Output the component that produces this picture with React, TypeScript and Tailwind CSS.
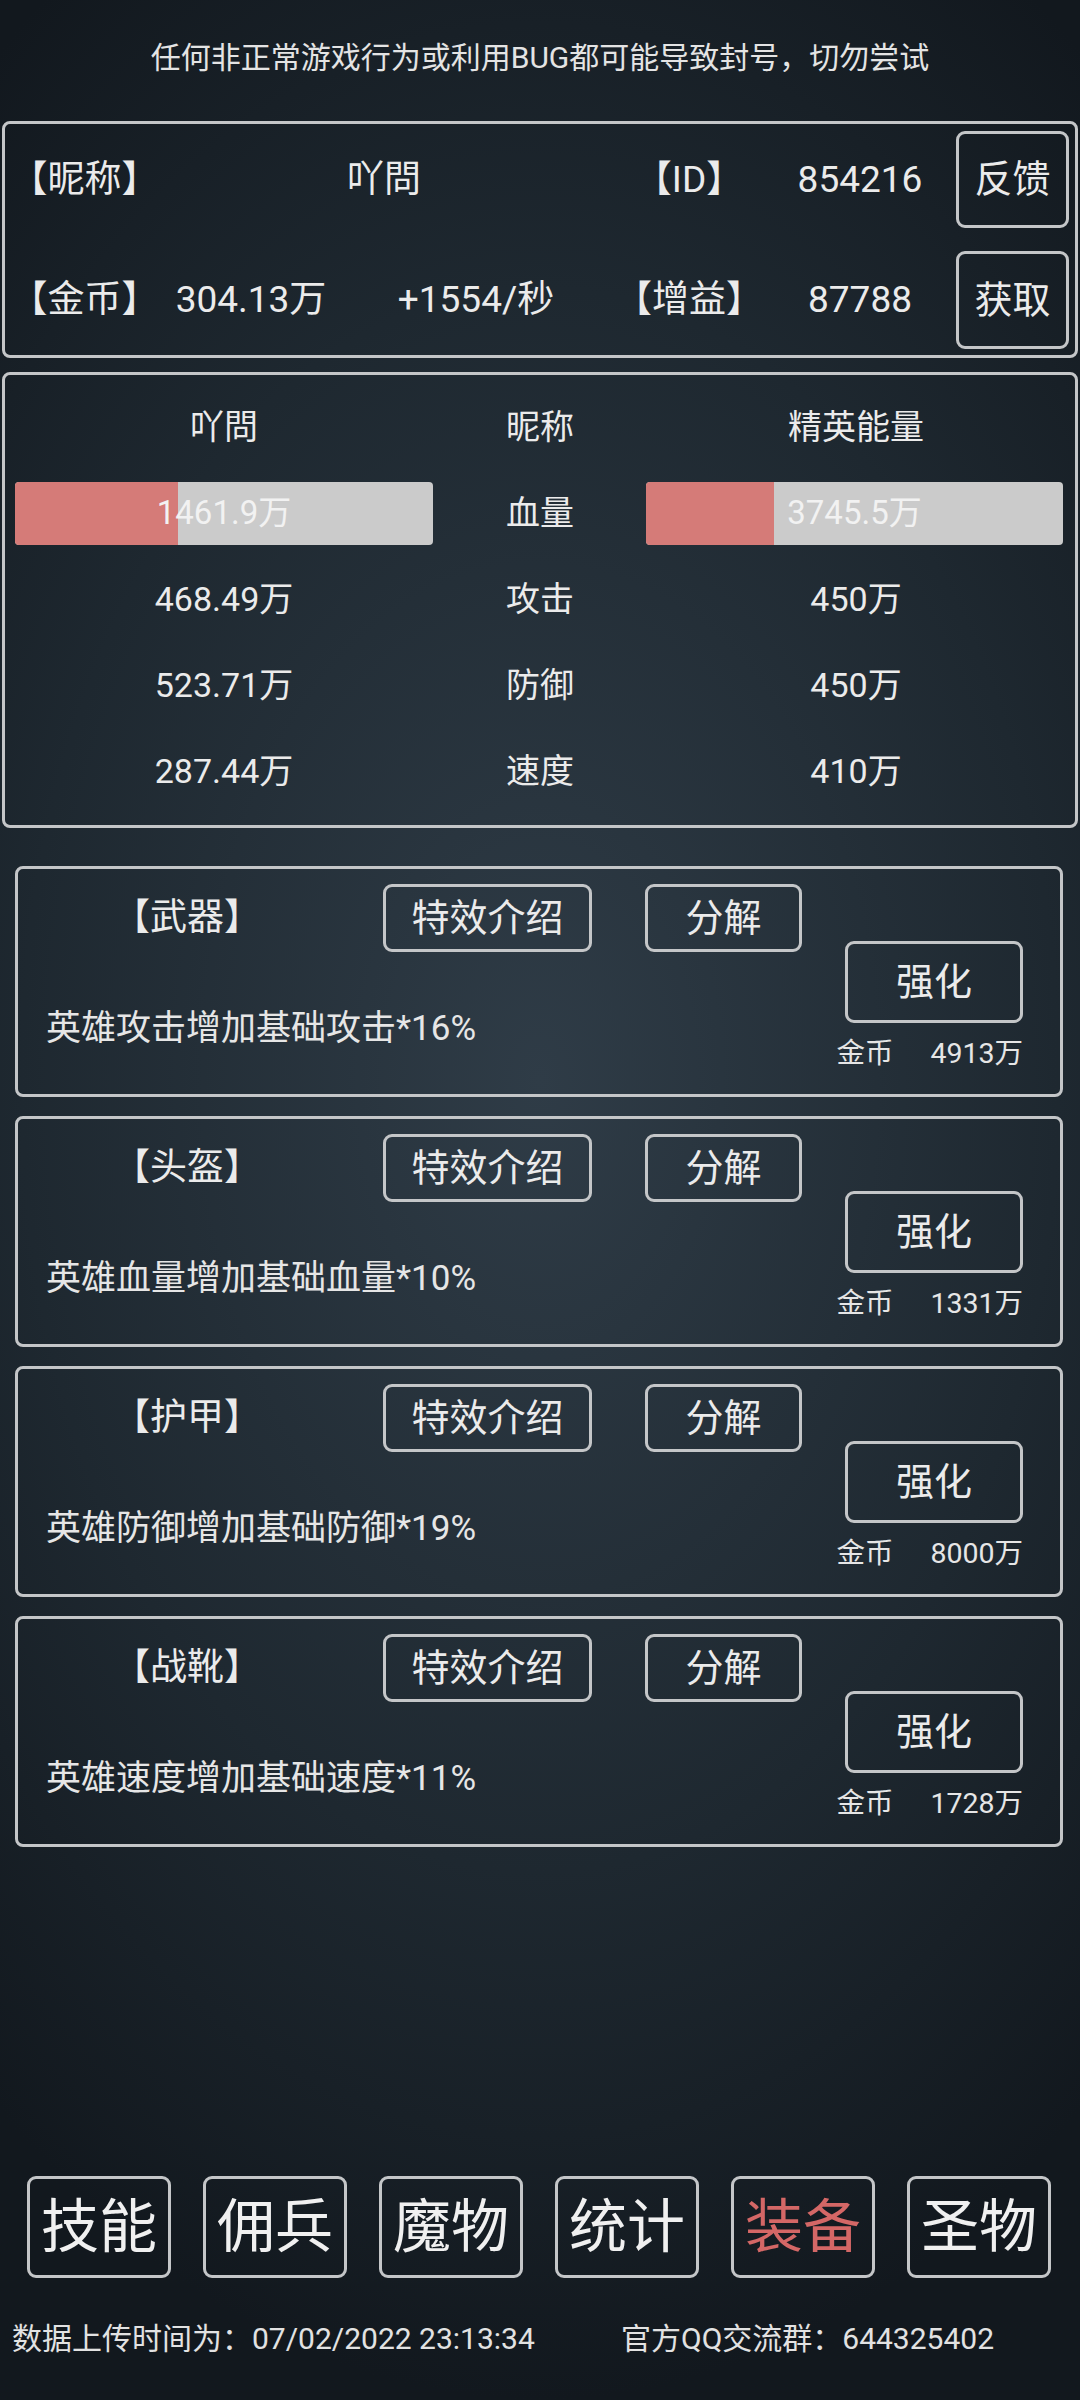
import React from "react";

const FONT = "font-['Roboto','Noto_Sans_CJK_SC',sans-serif]";

function OutlineBtn({ children, className }: { children: React.ReactNode; className: string }) {
  return (
    <div className={`flex items-center justify-center border-[3px] border-[#c4c6c8] rounded-[9px] ${className}`}>
      {children}
    </div>
  );
}

const items = [
  { name: "【武器】", desc: "英雄攻击增加基础攻击*16%", cost: "4913万" },
  { name: "【头盔】", desc: "英雄血量增加基础血量*10%", cost: "1331万" },
  { name: "【护甲】", desc: "英雄防御增加基础防御*19%", cost: "8000万" },
  { name: "【战靴】", desc: "英雄速度增加基础速度*11%", cost: "1728万" },
];

function Bar({ text, pct }: { text: string; pct: number }) {
  return (
    <div className="relative h-[63px] w-full rounded-[4px] bg-[#cbcbcb] overflow-hidden">
      <div className="absolute left-0 top-0 bottom-0 bg-[#d57b78]" style={{ width: `${pct}%` }} />
      <div className="absolute inset-0 flex items-center justify-center text-[33px] text-[#f2f2f2]">{text}</div>
    </div>
  );
}

export default function App() {
  const nav = ["技能", "佣兵", "魔物", "统计", "装备", "圣物"];
  return (
    <div
      className={`${FONT} w-[1080px] h-[2400px] flex flex-col text-[#ebebeb] bg-[radial-gradient(ellipse_80%_55%_at_50%_45%,#2f3c47_0%,#1e2830_60%,#12181e_100%)]`}
    >
      {/* warning */}
      <div className="pt-[38px] h-[121px] text-center text-[30px] leading-[40px] text-[#e4e4e4]">
        任何非正常游戏行为或利用BUG都可能导致封号，切勿尝试
      </div>

      {/* top info box */}
      <div className="mx-[2px] h-[237px] border-[3px] border-[#c4c6c8] rounded-[8px] pt-[7px] flex flex-col gap-[23px] text-[37px]">
        <div className="flex items-center h-[97px]">
          <div className="w-[159px] text-center">【昵称】</div>
          <div className="w-[450px] text-center pr-[10px]">吖問</div>
          <div className="w-[150px] text-center">【ID】</div>
          <div className="w-[192px] text-center">854216</div>
          <OutlineBtn className="w-[113px] h-[97px] text-[38px]">反馈</OutlineBtn>
        </div>
        <div className="flex items-center h-[98px]">
          <div className="w-[159px] text-center">【金币】</div>
          <div className="w-[174px] text-center">304.13万</div>
          <div className="w-[276px] text-center">+1554/秒</div>
          <div className="w-[150px] text-center">【增益】</div>
          <div className="w-[192px] text-center">87788</div>
          <OutlineBtn className="w-[113px] h-[98px] text-[38px]">获取</OutlineBtn>
        </div>
      </div>

      {/* stats box */}
      <div className="mx-[2px] mt-[14px] h-[456px] border-[3px] border-[#c4c6c8] rounded-[8px] pt-[9px] text-[34px]">
        <div className="grid grid-cols-[438px_1fr_438px] grid-rows-[repeat(5,86px)] items-center">
          <div className="text-center">吖問</div>
          <div className="text-center">昵称</div>
          <div className="text-center">精英能量</div>

          <div className="px-[10px]"><Bar text="1461.9万" pct={39} /></div>
          <div className="text-center">血量</div>
          <div className="pl-[9px] pr-[12px]"><Bar text="3745.5万" pct={30.7} /></div>

          <div className="text-center">468.49万</div>
          <div className="text-center">攻击</div>
          <div className="text-center">450万</div>

          <div className="text-center">523.71万</div>
          <div className="text-center">防御</div>
          <div className="text-center">450万</div>

          <div className="text-center">287.44万</div>
          <div className="text-center">速度</div>
          <div className="text-center">410万</div>
        </div>
      </div>

      {/* equipment cards */}
      <div className="mt-[38px] flex flex-col gap-[19px]">
        {items.map((it) => (
          <div
            key={it.name}
            className="mx-[15px] w-[1048px] h-[231px] border-[3px] border-[#c4c6c8] rounded-[8px] flex"
          >
            <div className="flex-1 flex flex-col">
              <div className="flex items-center h-[68px] mt-[15px]">
                <div className="w-[338px] text-center text-[37px]">{it.name}</div>
                <OutlineBtn className="ml-[27px] w-[209px] h-[68px] text-[38px]">特效介绍</OutlineBtn>
                <OutlineBtn className="ml-[53px] w-[157px] h-[68px] text-[38px]">分解</OutlineBtn>
              </div>
              <div className="mt-[57px] pl-[28px] text-[35px] leading-[40px] text-[#e6e6e6]">{it.desc}</div>
            </div>
            <div className="pr-[37px] flex flex-col items-end">
              <OutlineBtn className="mt-[72px] w-[178px] h-[82px] text-[38px]">强化</OutlineBtn>
              <div className="mt-[14px] flex gap-[37px] text-[28.5px] leading-[34px] text-[#e6e6e6]">
                <span>金币</span>
                <span>{it.cost}</span>
              </div>
            </div>
          </div>
        ))}
      </div>

      {/* bottom nav */}
      <div className="mt-auto flex pl-[27px] gap-[32px]">
        {nav.map((n) => (
          <OutlineBtn
            key={n}
            className={`w-[144px] h-[102px] text-[58px] ${n === "装备" ? "text-[#d46766]" : "text-[#f0f0f0]"}`}
          >
            {n}
          </OutlineBtn>
        ))}
      </div>

      <div className="mt-[41px] mb-[41px] h-[40px] flex items-center text-[30px] text-[#e2e2e2] leading-[40px]">
        <div className="w-[621px] pl-[12px] whitespace-nowrap">数据上传时间为：07/02/2022 23:13:34</div>
        <div className="whitespace-nowrap">官方QQ交流群：644325402</div>
      </div>
    </div>
  );
}
